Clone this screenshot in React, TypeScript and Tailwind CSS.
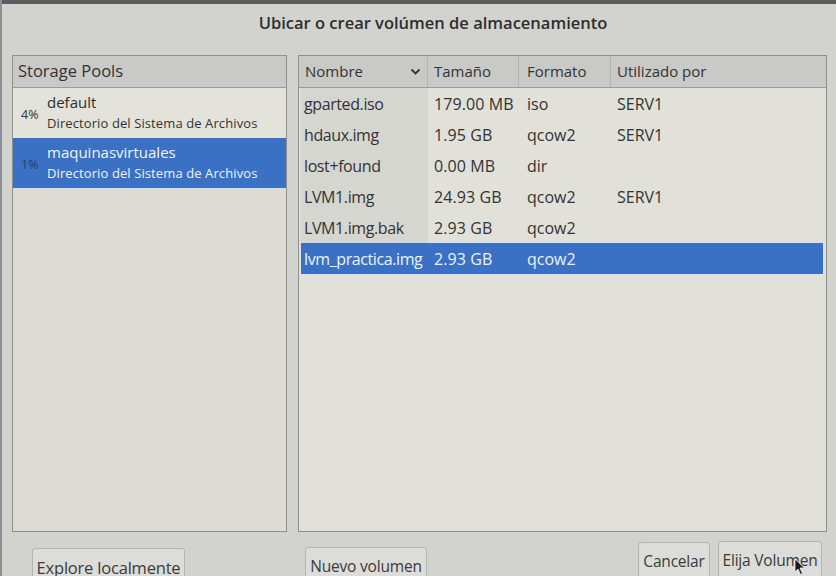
import React from "react";

const font = { fontFamily: '"Open Sans", "Noto Sans", "DejaVu Sans", sans-serif' };

const files = [
  { name: "gparted.iso", size: "179.00 MB", fmt: "iso", used: "SERV1" },
  { name: "hdaux.img", size: "1.95 GB", fmt: "qcow2", used: "SERV1" },
  { name: "lost+found", size: "0.00 MB", fmt: "dir", used: "" },
  { name: "LVM1.img", size: "24.93 GB", fmt: "qcow2", used: "SERV1" },
  { name: "LVM1.img.bak", size: "2.93 GB", fmt: "qcow2", used: "" },
  { name: "lvm_practica.img", size: "2.93 GB", fmt: "qcow2", used: "", sel: true },
];

function Btn({ children, w, mt, fs }: { children: React.ReactNode; w: string; mt: string; fs: string }) {
  return (
    <div
      className={`${w} ${mt} ${fs} h-[38px] shrink-0 rounded-[3px] border border-[#b4b4b0] bg-[#dcdcd8] text-[#3a3a3a] flex items-start justify-center pt-[7px] tracking-[-0.2px] whitespace-nowrap`}
    >
      {children}
    </div>
  );
}

export default function App() {
  return (
    <div
      className="relative w-[836px] h-[576px] overflow-hidden bg-[#d2d2cf] flex flex-col border-l-[2px] border-[#8e8e96]"
      style={font}
    >
      <div className="h-[4px] w-full bg-[#5c5c5e] shrink-0" />
      <div className="h-[51px] shrink-0 flex items-start justify-center pt-[7px] pl-[28px]">
        <span className="text-[16.5px] font-semibold text-[#2e2e2e] tracking-[0px]">
          Ubicar o crear volúmen de almacenamiento
        </span>
      </div>

      <div className="flex h-[477px] shrink-0 pl-[10px] gap-[11px]">
        {/* Storage pools */}
        <div className="w-[275px] h-full border border-[#8f8f8c] bg-[#dcdcd4] flex flex-col">
          <div className="h-[32px] shrink-0 bg-[#c9c9c7] border-b border-[#9c9c98] flex items-center pl-[5px] text-[16.5px] text-[#333]">
            Storage Pools
          </div>
          <div className="h-[50px] shrink-0 bg-[#e3e3db] flex items-center">
            <div className="w-[34px] pl-[8px] text-[12.5px] text-[#333] pt-[4px]">4%</div>
            <div className="flex flex-col leading-tight">
              <span className="text-[15px] text-[#2e2e2e] -mt-[2px]">default</span>
              <span className="text-[13px] text-[#333] mt-[4px] tracking-[0.1px]">Directorio del Sistema de Archivos</span>
            </div>
          </div>
          <div className="h-[50px] shrink-0 bg-[#3b71c4] flex items-center">
            <div className="w-[34px] pl-[8px] text-[12.5px] text-[#1f3d70] pt-[4px]">1%</div>
            <div className="flex flex-col leading-tight">
              <span className="text-[15px] text-[#f2f4f8] -mt-[2px]">maquinasvirtuales</span>
              <span className="text-[13px] text-[#eef1f6] mt-[4px] tracking-[0.1px]">Directorio del Sistema de Archivos</span>
            </div>
          </div>
          <div className="flex-1" />
        </div>

        {/* Volumes */}
        <div className="w-[529px] h-full border border-[#8f8f8c] bg-[#e1e1da] flex flex-col pl-[2px] pr-[3px]">
          <div className="h-[32px] shrink-0 bg-[#c9c9c7] border-b border-[#9c9c98] flex items-center text-[15px] text-[#333] -mx-[2px] -mr-[3px] pl-[2px]">
            <div className="w-[127px] h-full flex items-center justify-between pl-[4px] pr-[6px] border-r border-[#b2b2ae]">
              <span>Nombre</span>
              <svg width="11" height="8" viewBox="0 0 11 8">
                <path d="M1.5 1.5 L5.5 5.5 L9.5 1.5" stroke="#333" strokeWidth="1.8" fill="none" />
              </svg>
            </div>
            <div className="w-[91px] h-full flex items-center pl-[6px] border-r border-[#b2b2ae]">Tamaño</div>
            <div className="w-[92px] h-full flex items-center pl-[8px] border-r border-[#b2b2ae]">Formato</div>
            <div className="flex-1 h-full flex items-center pl-[6px]">Utilizado por</div>
          </div>
          {files.map((f) => (
            <div
              key={f.name}
              className={`h-[31px] shrink-0 flex items-center text-[16px] ${
                f.sel ? "bg-[#3b71c4] text-[#eef2f8]" : "text-[#333]"
              }`}
            >
              <div className={`w-[127px] h-full flex items-center pl-[3px] whitespace-nowrap tracking-[-0.4px] ${f.sel ? "" : "bg-[#d6d6d1]"}`}>
                {f.name}
              </div>
              <div className="w-[91px] h-full flex items-center pl-[6px] whitespace-nowrap tracking-[0.1px]">{f.size}</div>
              <div className="w-[92px] h-full flex items-center pl-[8px]">{f.fmt}</div>
              <div className="flex-1 h-full flex items-center pl-[6px]">{f.used}</div>
            </div>
          ))}
          <div className="flex-1" />
        </div>
      </div>

      <div className="flex h-[60px] shrink-0 items-start">
        <Btn w="w-[153px] ml-[30px]" mt="mt-[16px]" fs="text-[16.5px]">Explore localmente</Btn>
        <Btn w="w-[122px] ml-[120px]" mt="mt-[15px]" fs="text-[15.5px]">Nuevo volumen</Btn>
        <div className="flex-1" />
        <Btn w="w-[72px]" mt="mt-[10px]" fs="text-[15.5px]">Cancelar</Btn>
        <div className="relative ml-[8px] mr-[14px]">
          <Btn w="w-[104px]" mt="mt-[9px]" fs="text-[15.5px]">Elija Volumen</Btn>
          <svg className="absolute left-[76px] top-[26px]" width="12" height="18" viewBox="0 0 12 18">
            <path d="M1 1 L1 14 L4 11 L6.5 16.5 L8.5 15.5 L6 10 L10.5 10 Z" fill="#1a1a1a" stroke="#f0f0f0" strokeWidth="0.8" />
          </svg>
        </div>
      </div>
    </div>
  );
}
